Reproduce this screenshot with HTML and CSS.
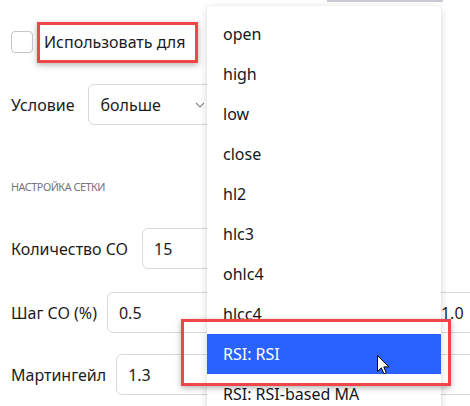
FILE: index.html
```html
<!DOCTYPE html>
<html lang="ru">
<head>
<meta charset="utf-8">
<link rel="stylesheet" href="styles.css">
</head>
<body>
<div class="page">
  <div class="topbar"></div>
  <div class="row row-check">
    <span class="checkbox"></span>
    <span class="label">Использовать для</span>
  </div>
  <div class="row row-cond">
    <span class="label">Условие</span>
    <div class="field select">
      <span>больше</span>
      <svg class="chev" width="10" height="6" viewBox="0 0 10 6"><path d="M1 1l4 4 4-4" fill="none" stroke="#8a8a94" stroke-width="1.2"/></svg>
    </div>
  </div>
  <div class="section">НАСТРОЙКА СЕТКИ</div>
  <div class="row row-count">
    <span class="label">Количество CO</span>
    <div class="field f-count">15</div>
  </div>
  <div class="row row-step">
    <span class="label">Шаг CO (%)</span>
    <div class="field f-step">0.5</div>
    <div class="field f-step2">1.0</div>
  </div>
  <div class="row row-mart">
    <span class="label">Мартингейл</span>
    <div class="field f-mart">1.3</div>
  </div>
</div>

<div class="dropdown">
  <div class="item">open</div>
  <div class="item">high</div>
  <div class="item">low</div>
  <div class="item">close</div>
  <div class="item">hl2</div>
  <div class="item">hlc3</div>
  <div class="item">ohlc4</div>
  <div class="item">hlcc4</div>
  <div class="item active">RSI: RSI</div>
  <div class="item">RSI: RSI-based MA</div>
</div>

<div class="mark mark-1"></div>
<div class="mark mark-2"></div>

<svg class="cursor" width="13" height="20" viewBox="0 0 13 20"><path d="M0.5 0.5L0.5 16.5L4.3 12.8L6.9 18.8L9.3 17.8L6.8 11.9L11.8 11.9Z" fill="#fff" stroke="#000" stroke-width="1" stroke-linejoin="miter"/></svg>
</body>
</html>
```

FILE: styles.css
```css
html, body {
  margin: 0;
  padding: 0;
  background: #fff;
}
body {
  width: 470px;
  height: 406px;
  overflow: hidden;
  position: relative;
  font-family: "Noto Sans", "DejaVu Sans", sans-serif;
  color: #1c1c22;
}
.page {
  padding-left: 11px;
  display: flex;
  flex-direction: column;
}
.topbar {
  margin-left: 316px;
  width: 116px;
  height: 2px;
  background: #cacad6;
}
.row {
  display: flex;
  align-items: center;
  gap: 10px;
  white-space: nowrap;
}
.label {
  font-size: 16px;
  line-height: 20px;
}
.row-check {
  margin-top: 29px;
  height: 22px;
  gap: 11px;
}
.checkbox {
  width: 22px;
  height: 22px;
  box-sizing: border-box;
  border: 1px solid #c4c4cc;
  border-radius: 4px;
  flex: none;
}
.field {
  box-sizing: border-box;
  height: 41px;
  border: 1px solid #d8d8de;
  border-radius: 6px;
  display: flex;
  align-items: center;
  padding-left: 11px;
  font-size: 16px;
  flex: none;
}
.row-cond { margin-top: 31px; gap: 14px; }
.select {
  width: 200px;
  justify-content: space-between;
  padding-right: 82px;
}
.chev { flex: none; }
.section {
  margin-top: 55px;
  font-size: 10.8px;
  line-height: 14px;
  color: #74747e;
  letter-spacing: -0.45px;
}
.row-count { margin-top: 34px; gap: 14px; }
.f-count { width: 200px; }
.row-step { margin-top: 23px; }
.f-step { width: 220px; }
.f-step2 { width: 200px; margin-left: 92px; }
.row-mart { margin-top: 21px; }
.f-mart { width: 400px; }

.dropdown {
  position: absolute;
  left: 207px;
  top: 6px;
  width: 234px;
  height: 430px;
  padding-top: 8px;
  box-sizing: border-box;
  background: #fff;
  border-radius: 4px;
  box-shadow: 0 2px 8px rgba(0, 0, 0, 0.16), 0 0 1px rgba(0, 0, 0, 0.12);
  color: #131722;
}
.item {
  height: 40px;
  line-height: 40px;
  padding-left: 16px;
  font-size: 16px;
}
.item.active {
  background: #2962ff;
  color: #fff;
}
.mark {
  position: absolute;
  box-sizing: border-box;
  border: 3px solid #f24545;
  box-shadow: 0 2px 6px rgba(0, 0, 0, 0.3);
}
.mark-1 { left: 37px; top: 22px; width: 161px; height: 41px; }
.mark-2 { left: 181px; top: 319px; width: 270px; height: 67px; }
.cursor {
  position: absolute;
  left: 377px;
  top: 355px;
}
```
